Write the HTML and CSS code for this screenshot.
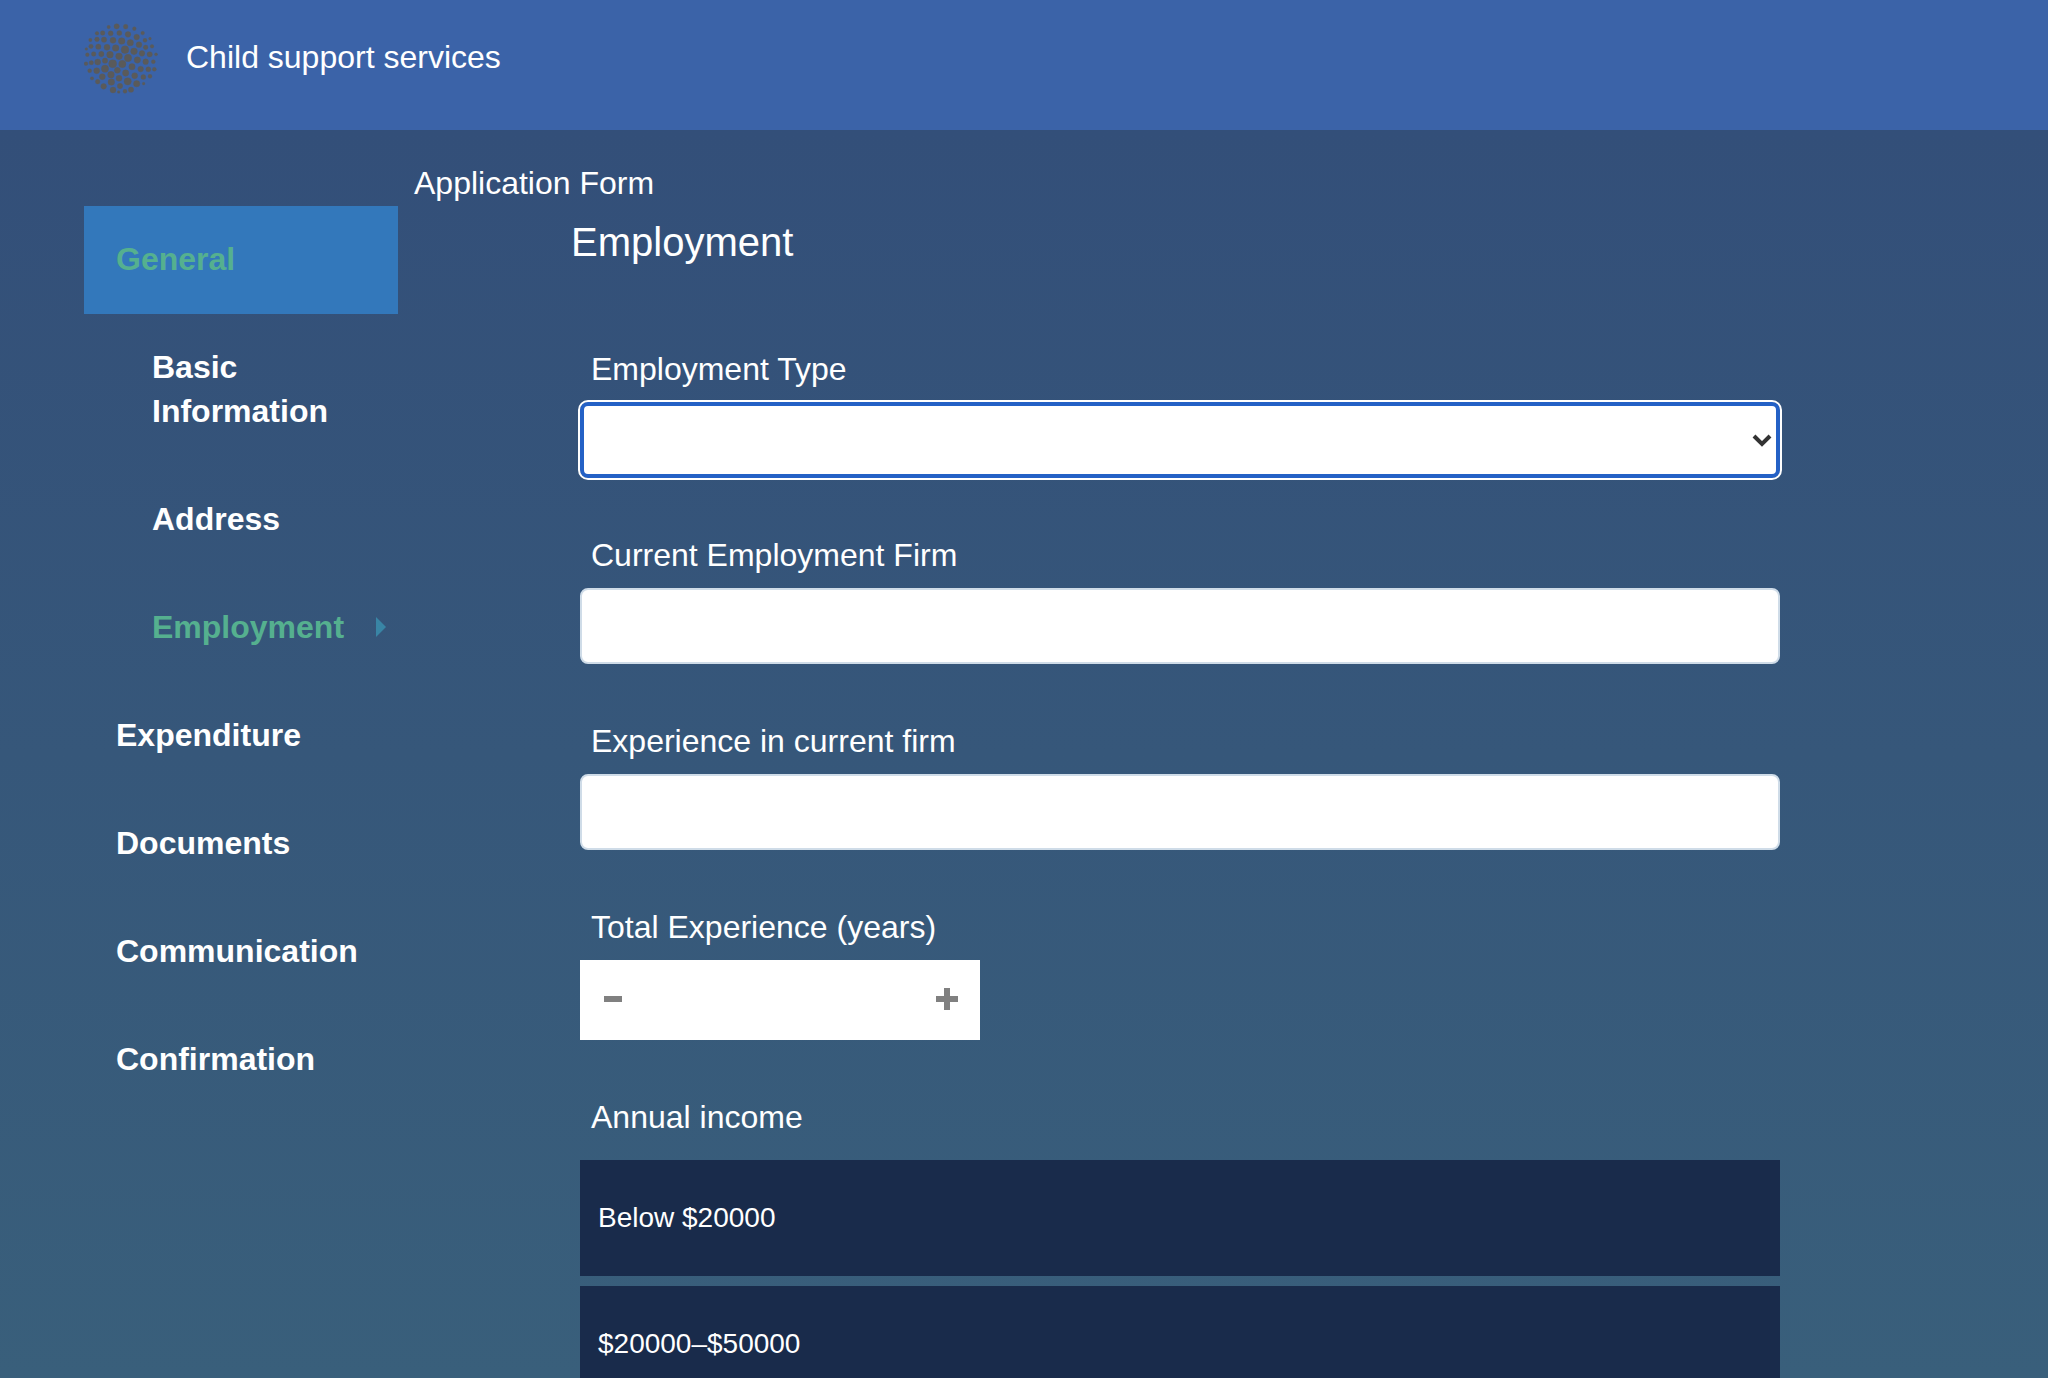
FILE: index.html
```html
<!DOCTYPE html>
<html lang="en">
<head>
<meta charset="utf-8">
<meta name="viewport" content="width=device-width, initial-scale=1">
<title>Child support services</title>
<link rel="stylesheet" href="styles.css">
</head>
<body>
<header class="site-header">
  <svg class="logo" viewBox="42 30 222 222" aria-hidden="true">
    <circle cx="116" cy="51" r="5"/><circle cx="140" cy="49" r="8"/><circle cx="167" cy="50" r="7"/><circle cx="193" cy="56" r="5.500"/>
    <circle cx="81" cy="70" r="5.500"/><circle cx="98" cy="69" r="7"/><circle cx="122" cy="70" r="7.500"/><circle cx="148" cy="69" r="7.500"/><circle cx="174" cy="73" r="8.500"/><circle cx="200" cy="81" r="8.500"/><circle cx="218" cy="69" r="5.500"/>
    <circle cx="61" cy="90" r="5"/><circle cx="81" cy="88" r="7"/><circle cx="102" cy="89" r="8"/><circle cx="129" cy="91" r="9"/><circle cx="155" cy="93" r="10"/><circle cx="181" cy="98" r="9.500"/><circle cx="207" cy="104" r="8.500"/><circle cx="225" cy="91" r="6"/><circle cx="240" cy="86" r="4"/>
    <circle cx="49" cy="117" r="4"/><circle cx="63" cy="109" r="6.500"/><circle cx="85" cy="110" r="8"/><circle cx="111" cy="112" r="9"/><circle cx="137" cy="114" r="10"/><circle cx="165" cy="119" r="11.500"/><circle cx="192" cy="124" r="10"/><circle cx="216" cy="130" r="8.500"/><circle cx="227" cy="112" r="7"/><circle cx="246" cy="109" r="5.500"/>
    <circle cx="52" cy="134" r="5.500"/><circle cx="71" cy="132" r="7"/><circle cx="94" cy="132" r="8"/><circle cx="120" cy="134" r="10"/><circle cx="147" cy="139" r="10"/><circle cx="174" cy="144" r="11"/><circle cx="202" cy="150" r="9.500"/><circle cx="227" cy="155" r="8.500"/><circle cx="239" cy="133" r="8"/><circle cx="258" cy="133" r="4.500"/>
    <circle cx="48" cy="161" r="5.500"/><circle cx="64" cy="158" r="6.500"/><circle cx="83" cy="156" r="9"/><circle cx="105" cy="152" r="8"/><circle cx="128" cy="161" r="12"/><circle cx="157" cy="162" r="11"/><circle cx="186" cy="170" r="9.500"/><circle cx="212" cy="177" r="8.500"/><circle cx="235" cy="178" r="7.500"/><circle cx="250" cy="155" r="6"/><circle cx="253" cy="178" r="6"/>
    <circle cx="59" cy="182" r="6"/><circle cx="80" cy="182" r="9"/><circle cx="105" cy="176" r="11"/><circle cx="142" cy="181" r="9"/><circle cx="167" cy="189" r="9.500"/><circle cx="194" cy="197" r="9"/><circle cx="220" cy="201" r="7.500"/><circle cx="240" cy="199" r="6"/>
    <circle cx="66" cy="205" r="5"/><circle cx="83" cy="215" r="7"/><circle cx="97" cy="200" r="9"/><circle cx="123" cy="194" r="10"/><circle cx="147" cy="205" r="9"/><circle cx="173" cy="214" r="11"/><circle cx="200" cy="221" r="9.500"/><circle cx="221" cy="221" r="4"/>
    <circle cx="101" cy="229" r="8.500"/><circle cx="124" cy="216" r="10"/><circle cx="150" cy="228" r="8"/><circle cx="129" cy="240" r="9"/><circle cx="146" cy="246" r="4"/><circle cx="165" cy="244" r="6"/><circle cx="183" cy="239" r="8"/>
  </svg>
  <span>Child support services</span>
</header>

<div class="page">
  <nav class="steps" aria-label="Form sections">
    <a class="step step-open" href="#general">General</a>
    <a class="step step-sub" href="#basic">Basic Information</a>
    <a class="step step-sub" href="#address">Address</a>
    <a class="step step-sub step-current" href="#employment" aria-current="step">Employment
      <svg class="marker" viewBox="0 0 10 20" aria-hidden="true"><path d="M0 0L10 10L0 20Z"/></svg>
    </a>
    <a class="step" href="#expenditure">Expenditure</a>
    <a class="step" href="#documents">Documents</a>
    <a class="step" href="#communication">Communication</a>
    <a class="step" href="#confirmation">Confirmation</a>
  </nav>

  <main class="content">
    <h1 class="form-title">Application Form</h1>
    <form class="panel" id="employment">
      <h2 class="panel-title">Employment</h2>

      <div class="field">
        <label class="label" for="type">Employment Type</label>
        <div class="select-wrap">
          <select class="control select" id="type"><option></option></select>
          <svg class="chevron" viewBox="0 0 20 14" aria-hidden="true"><path d="M2 2L10 10L18 2"/></svg>
        </div>
      </div>

      <div class="field">
        <label class="label" for="firm">Current Employment Firm</label>
        <input class="control" id="firm" type="text">
      </div>

      <div class="field">
        <label class="label" for="current">Experience in current firm</label>
        <input class="control" id="current" type="text">
      </div>

      <div class="field">
        <label class="label" for="total">Total Experience (years)</label>
        <div class="stepper">
          <button class="stepper-button" type="button" aria-label="Decrease">
            <svg class="sign" viewBox="0 0 22 24"><path d="M2 8h18v6H2z"/></svg>
          </button>
          <input class="stepper-value" id="total" type="number">
          <button class="stepper-button" type="button" aria-label="Increase">
            <svg class="sign" viewBox="0 0 22 24"><path d="M8 0h6v8h8v6h-8v8H8v-8H0V8h8z"/></svg>
          </button>
        </div>
      </div>

      <fieldset class="field choices">
        <legend class="label choices-label">Annual income</legend>
        <label class="choice"><input class="choice-input" type="radio" name="income">Below $20000</label>
        <label class="choice"><input class="choice-input" type="radio" name="income">$20000–$50000</label>
      </fieldset>
    </form>
  </main>
</div>
</body>
</html>
```

FILE: styles.css
```css
* {
  box-sizing: border-box;
}

body {
  display: flex;
  flex-direction: column;
  height: 100vh;
  margin: 0;
  overflow: hidden;
  background: #334f79;
  color: #fff;
  font: 32px/44px "Liberation Sans", Arial, sans-serif;
}

.site-header {
  display: flex;
  flex: none;
  align-items: center;
  gap: 28px;
  padding: 20px 84px 36px;
  background: #3b63a8;
}

.logo {
  width: 74px;
  height: 74px;
  fill: #5a5a5a;
  stroke: #5a5a5a;
  stroke-width: 1;
}

.page {
  display: grid;
  flex: 1;
  grid-template-columns: 314px 1fr;
  min-height: 0;
  padding: 0 84px;
  overflow-y: auto;
  scrollbar-width: none;
  background: linear-gradient(#334f79, #395f7b);
}

.steps {
  display: flex;
  flex-direction: column;
  padding-top: 76px;
}

.step {
  display: flex;
  align-items: center;
  justify-content: space-between;
  padding: 31px 12px 33px 32px;
  color: #fff;
  font-weight: bold;
  text-decoration: none;
}

.step-open {
  background: #3378bb;
  color: #55b08f;
}

.step-sub {
  padding-left: 68px;
}

.step-current {
  color: #55b08f;
}

.marker {
  width: 10px;
  height: 20px;
  fill: #3985a5;
}

.content {
  padding: 31px 0 0 16px;
}

.form-title {
  margin: 0;
  font-size: 32px;
  font-weight: normal;
}

.panel {
  padding: 9px 184px 40px 166px;
}

.panel-title {
  margin: 0 0 77px -9px;
  font-size: 40px;
  font-weight: normal;
  line-height: 56px;
}

.field {
  margin: 0 0 55px;
}

.label {
  display: block;
  margin-bottom: 11px;
  padding-left: 11px;
}

.control {
  display: block;
  width: 100%;
  height: 76px;
  padding: 0 16px;
  border: 2px solid #cfdce8;
  border-radius: 8px;
  background: #fff;
  color: #333;
  font: inherit;
}

.select-wrap {
  position: relative;
}

.select {
  border: 4px solid #2461c6;
  outline: 2px solid #fff;
  appearance: none;
}

.chevron {
  position: absolute;
  top: 32px;
  right: 8px;
  width: 20px;
  height: 14px;
  fill: none;
  stroke: #333;
  stroke-width: 4;
  pointer-events: none;
}

.stepper {
  display: flex;
  width: 400px;
  height: 80px;
  background: #fff;
}

.stepper-button {
  display: flex;
  align-items: center;
  justify-content: center;
  width: 66px;
  padding: 0;
  border: 0;
  background: none;
}

.sign {
  width: 22px;
  height: 24px;
  fill: #808080;
}

.stepper-value {
  flex: 1;
  min-width: 0;
  border: 0;
  background: none;
  color: #333;
  font: inherit;
  text-align: center;
  appearance: textfield;
}

.choices {
  display: flex;
  flex-direction: column;
  gap: 10px;
  padding: 0;
  border: 0;
}

.choices-label {
  margin-bottom: 21px;
}

.choice {
  position: relative;
  padding: 36px 18px;
  background: #192b4b;
  font-size: 28px;
}

.choice-input {
  position: absolute;
  margin: 0;
  opacity: 0;
}
```
